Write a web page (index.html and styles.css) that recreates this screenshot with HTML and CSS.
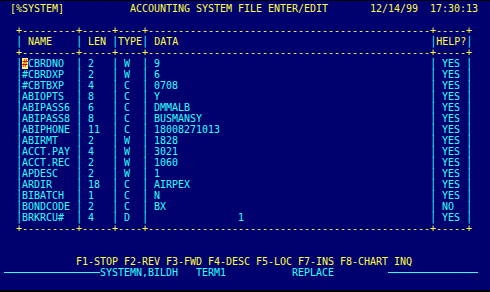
FILE: index.html
```html
<!DOCTYPE html>
<html>
<head>
<meta charset="utf-8">
<link rel="stylesheet" href="styles.css">
</head>
<body>
<div class="screen">
<div class="row y"> [%SYSTEM]           ACCOUNTING SYSTEM FILE ENTER/EDIT       12/14/99  17:30:13</div>
<div class="row"> </div>
<div class="row y">  +---------+-----+----+-----------------------------------------------+-----+</div>
<div class="row">  <span class="c">│</span><span class="y"> NAME    </span><span class="c">│</span><span class="y"> LEN </span><span class="c">│</span><span class="y">TYPE</span><span class="c">│</span><span class="y"> DATA                                          </span><span class="c">│</span><span class="y">HELP?</span><span class="c">│</span></div>
<div class="row y">  +---------+-----+----+-----------------------------------------------+-----+</div>
<div class="row c">  │<span class="cur">#</span>CBRDNO  │ 2   │ W  │ 9                                             │ YES │</div>
<div class="row c">  │#CBRDXP  │ 2   │ W  │ 6                                             │ YES │</div>
<div class="row c">  │#CBTBXP  │ 4   │ C  │ 0708                                          │ YES │</div>
<div class="row c">  │ABIOPTS  │ 8   │ C  │ Y                                             │ YES │</div>
<div class="row c">  │ABIPASS6 │ 6   │ C  │ DMMALB                                        │ YES │</div>
<div class="row c">  │ABIPASS8 │ 8   │ C  │ BUSMANSY                                      │ YES │</div>
<div class="row c">  │ABIPHONE │ 11  │ C  │ 18008271013                                   │ YES │</div>
<div class="row c">  │ABIRMT   │ 2   │ W  │ 1828                                          │ YES │</div>
<div class="row c">  │ACCT.PAY │ 4   │ W  │ 3021                                          │ YES │</div>
<div class="row c">  │ACCT.REC │ 2   │ W  │ 1060                                          │ YES │</div>
<div class="row c">  │APDESC   │ 2   │ W  │ 1                                             │ YES │</div>
<div class="row c">  │ARDIR    │ 18  │ C  │ AIRPEX                                        │ YES │</div>
<div class="row c">  │BIBATCH  │ 1   │ C  │ N                                             │ YES │</div>
<div class="row c">  │BONDCODE │ 2   │ C  │ BX                                            │ NO  │</div>
<div class="row c">  │BRKRCU#  │ 4   │ D  │               1                               │ YES │</div>
<div class="row y">  +---------+-----+----+-----------------------------------------------+-----+</div>
<div class="row"> </div>
<div class="row"> </div>
<div class="row y">            F1-STOP F2-REV F3-FWD F4-DESC F5-LOC F7-INS F8-CHART INQ</div>
<div class="row c"><span class="rule">                </span>SYSTEMN,BILDH   TERM1           REPLACE         <span class="rule">               </span></div>
</div>
</body>
</html>
```

FILE: styles.css
```css
html, body {
  margin: 0;
  padding: 0;
  background: #000;
}

.screen {
  width: 490px;
  height: 289px;
  margin-top: 1px;
  background: #00006e;
  padding: 2px 0 0 4px;
  box-sizing: border-box;
  overflow: hidden;
  font-family: "DejaVu Sans Mono", "Liberation Mono", monospace;
  font-size: 10px;
  line-height: 11px;
  letter-spacing: -0.02px;
}

.row {
  height: 11px;
  white-space: pre;
}

.y { color: #ffff40; }
.c { color: #30ffff; }

.cur {
  background: #ffff70;
  color: #e00000;
}

.rule {
  display: inline-block;
  height: 11px;
  vertical-align: top;
  background: linear-gradient(#30ffff, #30ffff) 0 5px / 100% 1px no-repeat;
}
```
